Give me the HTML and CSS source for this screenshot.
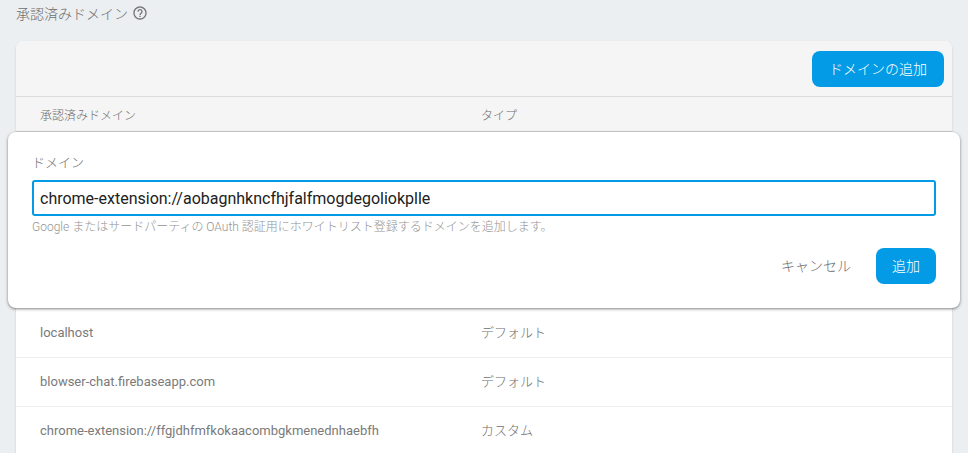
FILE: index.html
```html
<!DOCTYPE html>
<html lang="ja">
<head>
<meta charset="utf-8">
<title>承認済みドメイン</title>
<link rel="stylesheet" href="styles.css">
</head>
<body>
<main class="page">
  <header class="section-title">
    <span class="cjk">承認済みドメイン</span>
    <svg class="help" viewBox="0 0 24 24" width="16" height="16" aria-hidden="true"><path fill="#757575" d="M11 18h2v-2h-2v2zm1-16C6.48 2 2 6.48 2 12s4.48 10 10 10 10-4.48 10-10S17.52 2 12 2zm0 18c-4.41 0-8-3.59-8-8s3.59-8 8-8 8 3.59 8 8-3.59 8-8 8zm0-14c-2.21 0-4 1.79-4 4h2c0-1.1.9-2 2-2s2 .9 2 2c0 2-3 1.75-3 5h2c0-2.25 3-2.5 3-5 0-2.21-1.79-4-4-4z"/></svg>
  </header>
  <section class="card">
    <div class="toolbar"><button class="btn btn-primary btn-add-domain">ドメインの追加</button></div>
    <div class="row row-head"><span class="col-domain cjk">承認済みドメイン</span><span class="col-type cjk">タイプ</span></div>
    <div class="rows">
      <div class="row"><span class="col-domain">localhost</span><span class="col-type cjk">デフォルト</span></div>
      <div class="row"><span class="col-domain">blowser-chat.firebaseapp.com</span><span class="col-type cjk">デフォルト</span></div>
      <div class="row"><span class="col-domain">chrome-extension://ffgjdhfmfkokaacombgkmenednhaebfh</span><span class="col-type cjk">カスタム</span></div>
    </div>
  </section>
  <form class="dialog">
    <label class="field-label cjk" for="domain">ドメイン</label>
    <input class="field-input" id="domain" type="text" value="chrome-extension://aobagnhkncfhjfalfmogdegoliokplle">
    <p class="hint">Google またはサードパーティの OAuth 認証用にホワイトリスト登録するドメインを追加します。</p>
    <div class="actions">
      <button type="button" class="btn btn-text">キャンセル</button>
      <button type="button" class="btn btn-primary btn-confirm">追加</button>
    </div>
  </form>
</main>
</body>
</html>
```
FILE: styles.css
```css
* { box-sizing: border-box; }
html, body { margin: 0; height: 453px; overflow: hidden; }
body {
  background: #eceff1;
  font-family: Roboto, "Noto Sans CJK JP", sans-serif;
  color: #757575;
}
.cjk { font-weight: 300; color: #6e6e6e; }
.page { position: relative; height: 453px; overflow: hidden; padding: 0 16px; }
.section-title {
  display: flex; align-items: center; gap: 4px;
  height: 26px; padding-bottom: 1px; font-size: 14px;
}
.help { flex: none; }
.card {
  margin-top: 15px; background: #fff; border-radius: 8px 8px 0 0;
  box-shadow: 0 1px 2px rgba(0,0,0,.2);
  overflow: hidden; height: 412px;
}
.toolbar {
  display: flex; justify-content: flex-end; align-items: flex-start;
  height: 56px; padding: 10px 8px 0; background: #f5f5f5;
  border-bottom: 1px solid #dcdcdc;
}
.btn {
  border: 0; padding: 0; font-family: inherit; font-size: 14px; font-weight: 300; border-radius: 8px; cursor: pointer;
}
.btn-primary { background: #039be5; color: #fff; height: 36px; }
.btn-add-domain { width: 132px; padding-bottom: 2px; }
.row {
  display: flex; align-items: center; height: 49px; padding: 0 24px 2px;
  font-size: 13px; color: #7a7a7a; background: #fff; border-bottom: 1px solid #eeeeee;
}
.row-head { height: 35px; padding-bottom: 0; background: #f5f5f5; font-size: 12px; border-bottom: 1px solid #cfcfcf; }
.rows { padding-top: 177px; }
.col-domain { width: 441px; flex: none; }
.col-type { position: relative; top: -1px; }
.row-head .col-type { top: 0; }
.dialog {
  position: absolute; left: 8px; top: 132px; width: 952px; height: 176px;
  background: #fff; border-radius: 8px; padding: 21px 24px 0;
  box-shadow: 0 1px 3px rgba(0,0,0,.5);
  display: flex; flex-direction: column;
}
.field-label { font-size: 13px; line-height: 19px; }
.field-input {
  margin-top: 8px; height: 36px; width: 100%; padding: 0 6px;
  border: 2px solid #039be5; border-radius: 3px; outline: 0;
  font-family: inherit; font-size: 16px; color: #212121;
}
.hint { margin: 4px 0 0; font-size: 12px; line-height: 15px; color: #949494; font-weight: 300; }
.actions { display: flex; justify-content: flex-end; align-items: center; gap: 14px; margin-top: 13px; }
.btn-text { background: none; color: #6e6e6e; height: 36px; width: 92px; padding-bottom: 3px; }
.btn-confirm { width: 60px; padding-bottom: 2px; }
```
